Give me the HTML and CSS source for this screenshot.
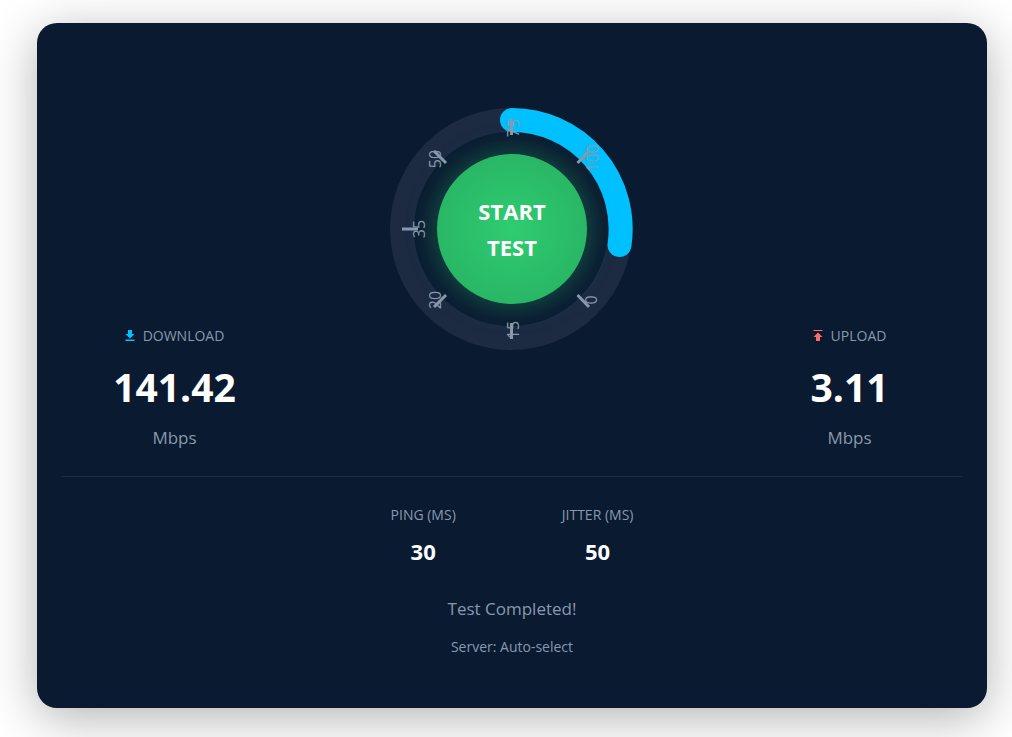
FILE: index.html
```html
<!DOCTYPE html>
<html lang="en">

<head>
  <meta charset="UTF-8" />
  <meta name="viewport" content="width=device-width, initial-scale=1.0" />
  <title>Speed Test</title>
  <link rel="stylesheet" href="styles.css">
</head>

<body>
  <main class="card">
    <section class="results">
      <div class="result">
        <div class="label">
          <svg class="icon download" viewBox="0 0 10 12" aria-hidden="true">
            <path d="M3 0h4v4h2.500L5 8.500 .5 4H3zM.5 9.500h9v1.500h-9z" />
          </svg>
          DOWNLOAD
        </div>
        <div class="value">141.42</div>
        <div class="unit">Mbps</div>
      </div>

      <div class="gauge">
        <svg class="dial" viewBox="-122 -121 244 242" aria-hidden="true">
          <circle class="track" cx="-1" r="109" />
          <path class="progress" d="M0 -109A109 109 0 0 1 107.500 16" />
          <g class="numbers">
            <text transform="translate(85 71) rotate(-90)">0</text>
            <text transform="translate(7 101) rotate(-90)">15</text>
            <text transform="translate(-71 71) rotate(-90)">20</text>
            <text transform="translate(-87 0) rotate(-90)">35</text>
            <text transform="translate(-71 -70) rotate(-90)">50</text>
            <text transform="translate(7 -101) rotate(-90)">75</text>
            <text transform="translate(86 -71) rotate(-90)">100</text>
          </g>
          <g class="ticks">
            <path d="M65.500 66L77 78" />
            <path d="M-.5 94V110" />
            <path d="M-66 66L-78 78" />
            <path d="M-94 0H-110" />
            <path d="M-66 -66L-78 -78" />
            <path d="M-.5 -94V-110" />
            <path d="M65.500 -66L77 -78" />
          </g>
        </svg>
        <button class="start" type="button">START TEST</button>
      </div>

      <div class="result">
        <div class="label">
          <svg class="icon upload" viewBox="0 0 10 12" aria-hidden="true">
            <path d="M.5 0h9v1h-9zM5 2.500l4.500 4.500H7V11H3V7H.5z" />
          </svg>
          UPLOAD
        </div>
        <div class="value">3.11</div>
        <div class="unit">Mbps</div>
      </div>
    </section>

    <section class="details">
      <div class="detail">
        <div class="label">PING (MS)</div>
        <div class="number">30</div>
      </div>
      <div class="detail">
        <div class="label">JITTER (MS)</div>
        <div class="number">50</div>
      </div>
    </section>

    <p class="status">Test Completed!</p>
    <p class="server">Server: Auto-select</p>
  </main>
</body>

</html>
```

FILE: styles.css
```css
* {
  box-sizing: border-box;
}

body {
  margin: 0;
  padding: 23px 25px 29px 37px;
  background-color: #fff;
  color: #8899ac;
  font-family: "Open Sans", "Noto Sans", sans-serif;
  line-height: 24px;
}

.card {
  padding: 85px 25px 49px;
  background-color: #0a1a31;
  border-radius: 20px;
  box-shadow: 0 10px 50px rgba(0, 0, 0, 0.3);
  text-align: center;
}

.results {
  display: grid;
  grid-template-columns: 1fr 2fr 1fr;
  padding-bottom: 26px;
  border-bottom: 1px solid #1d2c43;
}

.result {
  align-self: end;
}

.label {
  display: flex;
  justify-content: center;
  align-items: center;
  gap: 8px;
  font-size: 14px;
}

.icon {
  width: 10px;
  height: 12px;
}

.download {
  fill: #00c0ff;
}

.upload {
  fill: #ff6b6b;
}

.value {
  padding: 7px 0;
  color: #fff;
  font-size: 39px;
  font-weight: bold;
  line-height: 64px;
}

.unit {
  font-size: 17px;
}

.gauge {
  display: grid;
  place-items: center;
  justify-self: center;
  margin-bottom: 100px;
}

.dial,
.start {
  grid-area: 1 / 1;
}

.dial {
  width: 244px;
  height: 242px;
}

.track,
.progress {
  fill: none;
  stroke-width: 24px;
}

.track {
  stroke: #1c2a42;
}

.progress {
  stroke: #00c0ff;
  stroke-linecap: round;
}

.numbers {
  fill: #8899ac;
  font-size: 16px;
  text-anchor: middle;
}

.ticks {
  stroke: #8899ac;
  stroke-width: 3px;
}

.start {
  width: 150px;
  height: 150px;
  padding: 0 32px;
  border: none;
  border-radius: 50%;
  background: radial-gradient(circle, #2ecc71, #27ae60);
  box-shadow: 0 0 30px rgba(46, 204, 113, 0.4);
  color: #fff;
  font-family: inherit;
  font-size: 22px;
  font-weight: bold;
  line-height: 36px;
  cursor: pointer;
}

.details {
  display: flex;
  justify-content: center;
  gap: 106px;
  padding-top: 26px;
}

.number {
  padding-top: 6px;
  color: #fff;
  font-size: 22px;
  font-weight: bold;
  line-height: 36px;
}

.status {
  margin: 26px 0 0;
  font-size: 17px;
  line-height: 28px;
}

.server {
  margin: 12px 0 0;
  font-size: 14px;
}
```
